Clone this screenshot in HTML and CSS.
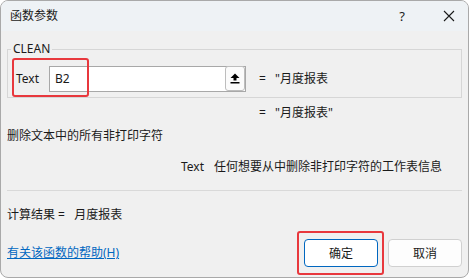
FILE: index.html
```html
<!DOCTYPE html>
<html lang="zh-CN">
  <head>
    <meta charset="utf-8">
    <title>函数参数</title>
    <link rel="stylesheet" href="styles.css">
  </head>
  <body>
    <div class="dialog">
      <div class="titlebar">
        <span class="title">函数参数</span>
        <span class="help">?</span>
        <span class="close">
          <svg width="12" height="12" viewBox="0 0 12 12"><path d="M1 1 L11 11 M11 1 L1 11" stroke="#1a1a1a" stroke-width="1.1" fill="none"/></svg>
        </span>
      </div>

      <div class="content">
        <fieldset class="group">
          <legend>CLEAN</legend>
          <div class="argRow">
            <span class="argLabel">Text</span>
            <div class="refInput">
              <span class="refValue">B2</span>
              <span class="refBtn">
                <svg width="10" height="11" viewBox="0 0 10 11"><path d="M5 0.5 L9.5 5 L6.5 5 L6.5 7.5 L3.5 7.5 L3.5 5 L0.5 5 Z" fill="#000"/><rect x="0.5" y="9" width="9" height="1.5" fill="#000"/></svg>
              </span>
            </div>
            <span class="eq">=</span>
            <span class="argVal">"月度报表</span>
          </div>
        </fieldset>

        <div class="resultLine">
          <span class="eq">=</span>
          <span class="argVal">"月度报表"</span>
        </div>

        <p class="desc">删除文本中的所有非打印字符</p>

        <p class="argDesc"><span class="argName">Text</span>任何想要从中删除非打印字符的工作表信息</p>

        <div class="sep"></div>

        <p class="calc">计算结果 =&nbsp;&nbsp;&nbsp;月度报表</p>

        <div class="footer">
          <a class="helpLink" href="#">有关该函数的帮助(H)</a>
          <div class="buttons">
            <button class="btn primary">确定</button>
            <button class="btn">取消</button>
          </div>
        </div>
      </div>

      <!-- annotation boxes -->
      <div class="mark markInput"></div>
      <div class="mark markOk"></div>
    </div>
  </body>
</html>
```

FILE: styles.css
```css
html {
  font-family: "Noto Sans", "Noto Sans CJK SC", sans-serif;
  font-size: 12px;
  line-height: 16px;
  color: #1a1a1a;
}

body {
  margin: 0;
  background-color: #ffffff;
}

.dialog {
  position: relative;
  width: 467px;
  height: 276px;
  border: 1px solid #a9a9a9;
  border-radius: 8px;
  background-color: #f0f0f0;
  overflow: hidden;
}

.titlebar {
  display: flex;
  align-items: center;
  height: 30px;
  background-color: #eef2f5;
}

.title {
  margin-left: 9px;
  flex: 1;
}

.help {
  width: 14px;
  text-align: center;
  font-size: 13px;
  margin-right: 34px;
}

.close {
  display: flex;
  margin-right: 13px;
}

.content {
  padding: 10px 6px 0 6px;
}

.group {
  margin: 0;
  padding: 9px 3px 5px 3px;
  border: 1px solid #d6d6d6;
  border-radius: 0;
}

.group legend {
  padding: 0 2px;
  line-height: 16px;
}

.argRow {
  display: flex;
  align-items: center;
  height: 26px;
}

.argLabel {
  width: 33px;
  margin-left: 5px;
}

.refInput {
  display: flex;
  align-items: center;
  justify-content: space-between;
  box-sizing: border-box;
  width: 197px;
  height: 26px;
  border: 1px solid #a8a8a8;
  background-color: #ffffff;
}

.refValue {
  padding-left: 5px;
}

.refBtn {
  display: flex;
  align-items: center;
  justify-content: center;
  box-sizing: border-box;
  width: 20px;
  height: 25px;
  margin-top: -1px;
  border: 1px solid #bdbdbd;
  border-radius: 3px;
  background-color: #fbfbfb;
}

.eq {
  margin-left: 13px;
  width: 16px;
}

.resultLine {
  display: flex;
  margin-top: 7px;
  padding-left: 239px;
}

.desc {
  margin: 7px 0 0 0;
}

.argDesc {
  margin: 15px 0 0 0;
  padding-left: 174px;
}

.argName {
  margin-right: 10px;
}

.sep {
  margin-top: 15px;
  height: 1px;
  background-color: #d9d9d9;
}

.calc {
  margin: 16px 0 0 0;
}

.footer {
  display: flex;
  align-items: center;
  justify-content: space-between;
  margin-top: 16px;
}

.helpLink {
  color: #0067c0;
  text-decoration: underline;
}

.buttons {
  display: flex;
  gap: 10px;
}

.btn {
  width: 74px;
  height: 28px;
  border: 1px solid #d0d0d0;
  border-radius: 4px;
  background-color: #fdfdfd;
  font-family: inherit;
  font-size: 12px;
  color: #1a1a1a;
}

.btn.primary {
  border-color: #0067c0;
  background-color: #ffffff;
}

.mark {
  position: absolute;
  border: 2px solid #e8383d;
  border-radius: 3px;
}

.markInput {
  left: 11px;
  top: 57px;
  width: 73px;
  height: 35px;
}

.markOk {
  left: 296px;
  top: 230px;
  width: 83px;
  height: 40px;
}
```
